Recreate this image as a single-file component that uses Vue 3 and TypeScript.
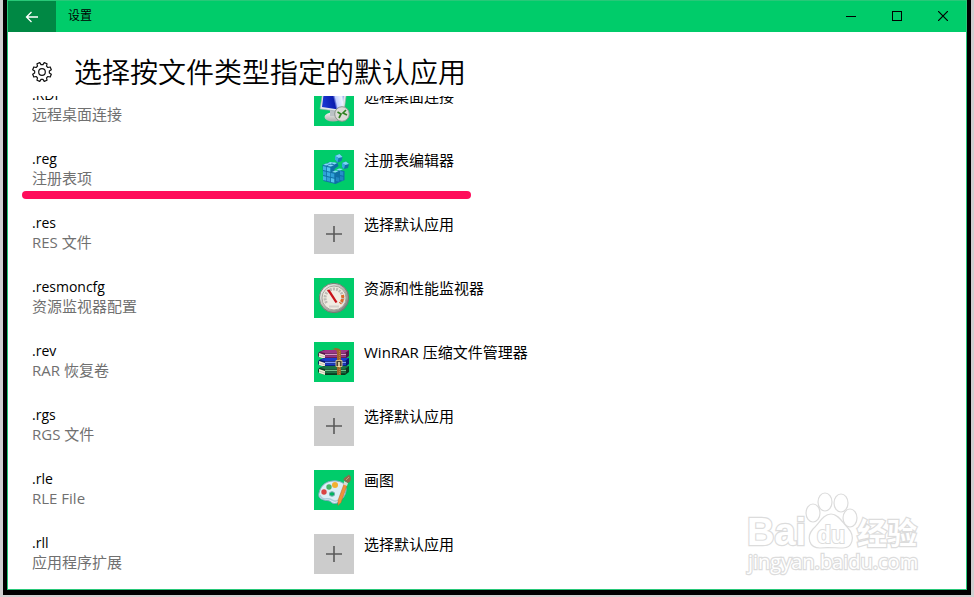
<script setup lang="ts">
type IconName = 'remote' | 'registry' | 'add' | 'gauge' | 'archive' | 'paint'

interface Association {
  ext: string
  kind: string
  app: string
  icon: IconName
  marked?: boolean
}

const associations: Association[] = [
  { ext: '.RDP', kind: '远程桌面连接', app: '远程桌面连接', icon: 'remote' },
  { ext: '.reg', kind: '注册表项', app: '注册表编辑器', icon: 'registry', marked: true },
  { ext: '.res', kind: 'RES 文件', app: '选择默认应用', icon: 'add' },
  { ext: '.resmoncfg', kind: '资源监视器配置', app: '资源和性能监视器', icon: 'gauge' },
  { ext: '.rev', kind: 'RAR 恢复卷', app: 'WinRAR 压缩文件管理器', icon: 'archive' },
  { ext: '.rgs', kind: 'RGS 文件', app: '选择默认应用', icon: 'add' },
  { ext: '.rle', kind: 'RLE File', app: '画图', icon: 'paint' },
  { ext: '.rll', kind: '应用程序扩展', app: '选择默认应用', icon: 'add' },
]

// Front faces of the registry blocks: column, row, fill
const cubes: [number, number, string][] = [
  [9, 16, '#3fb3e6'], [9, 21, '#2f9fd8'], [9, 26, '#3fb3e6'],
  [13, 17, '#52c3ef'], [13, 22, '#3aaee2'], [13, 27, '#2f9fd8'],
  [17, 23, '#2f9fd8'], [17, 28, '#52c3ef'],
  [22, 27, '#1f86c0'], [26, 21, '#2590ca'], [26, 26, '#1f86c0'],
]

const books = [
  { y: 9, cover: '#9c3485', light: '#d795c6', dark: '#571549' },
  { y: 17, cover: '#1a3ccc', light: '#7c9af6', dark: '#08186c' },
  { y: 25, cover: '#1b7445', light: '#6cc28a', dark: '#083a1e' },
]

const gearPoints = Array.from({ length: 32 }, (_, i) => {
  const tooth = Math.floor(i / 4)
  const part = i % 4
  const offsets = [-15, -9, 9, 15]
  const radius = part === 0 || part === 3 ? 7.4 : 9.6
  const angle = ((tooth * 45 + 22.5 + offsets[part]) * Math.PI) / 180
  return `${(10 + Math.cos(angle) * radius).toFixed(2)},${(10 + Math.sin(angle) * radius).toFixed(2)}`
}).join(' ')
</script>

<template>
  <div class="desktop">
    <div class="edge">
      <main class="window">
        <header class="titlebar">
          <button class="back" aria-label="返回">
            <svg width="14" height="12" viewBox="0 0 14 12"><path d="M13 6H1.5M6.5 1L1.5 6l5 5" fill="none" stroke="#fff" stroke-width="1.3" /></svg>
          </button>
          <span class="caption">设置</span>
          <button class="control" aria-label="最小化">
            <svg width="10" height="10" viewBox="0 0 10 10" shape-rendering="crispEdges"><path d="M0 5.5h10" stroke="#000" /></svg>
          </button>
          <button class="control" aria-label="最大化">
            <svg width="10" height="10" viewBox="0 0 10 10" shape-rendering="crispEdges"><path d="M.5.5h9v9h-9z" fill="none" stroke="#000" /></svg>
          </button>
          <button class="control" aria-label="关闭">
            <svg width="10" height="10" viewBox="0 0 10 10"><path d="M0 0l10 10M10 0L0 10" stroke="#000" stroke-width="1.2" /></svg>
          </button>
        </header>

        <div class="heading">
          <svg width="20" height="20" viewBox="0 0 20 20" fill="none" stroke="#111" stroke-width="1.2" stroke-linejoin="round">
            <polygon :points="gearPoints" />
            <circle cx="10" cy="10" r="3.3" />
          </svg>
          <h1>选择按文件类型指定的默认应用</h1>
        </div>

        <div class="viewport">
          <ul class="list">
            <li v-for="item in associations" :key="item.ext" class="row" :class="{ marked: item.marked }">
              <div class="type">
                <span class="ext">{{ item.ext }}</span>
                <span class="kind">{{ item.kind }}</span>
              </div>
              <button class="app">
                <span class="tile" :class="{ empty: item.icon === 'add' }">
                  <svg v-if="item.icon === 'add'" width="40" height="40" viewBox="0 0 40 40">
                    <path d="M12 20h16M20 12v16" stroke="#5a5a5a" stroke-width="1.6" />
                  </svg>
                  <svg v-else-if="item.icon === 'remote'" width="40" height="40" viewBox="0 0 40 40">
                    <defs>
                      <linearGradient id="screen" x1="0" y1=".3" x2="1" y2=".1"><stop offset="0" stop-color="#1a35d0" /><stop offset=".45" stop-color="#0a1cae" /><stop offset=".55" stop-color="#c4d2ff" /><stop offset=".8" stop-color="#eef3ff" /><stop offset="1" stop-color="#4a68e0" /></linearGradient>
                      <linearGradient id="metal" x2="0" y2="1"><stop offset="0" stop-color="#f2f2f2" /><stop offset="1" stop-color="#aaa" /></linearGradient>
                    </defs>
                    <ellipse cx="19" cy="31" rx="8.5" ry="4.5" fill="url(#metal)" />
                    <path d="M16 23h7v7h-7z" fill="#bbc1c5" />
                    <path d="M9 4l24-1-3 23L6 23z" fill="#e3e7e9" stroke="#9ba7ac" stroke-width=".6" />
                    <path d="M10 5l21-1-3 20-20-3z" fill="url(#screen)" />
                    <circle cx="28" cy="28" r="7.3" fill="#dcdcd8" stroke="#8d9690" />
                    <path d="M23.500 26l3.500 2-2 4M32 24l-3 3 4 2" fill="none" stroke="#318222" stroke-width="1.7" />
                  </svg>
                  <svg v-else-if="item.icon === 'registry'" width="40" height="40" viewBox="0 0 40 40">
                    <path d="M8.500 15l7-3 8 1 1 3-4 3v4l4-3 6 1v9l-9 4-12-3z" fill="#0f6ea6" />
                    <path d="M9 15l3-1.500 3.500.5-3 1.500zM13 13.500l3-1.500 3.500.5-3 1.500zM17 13l3-.7 3 .7-2.500 1.500zM13 16l3-1.500 4 .5-3 1.500z" fill="#86dbf7" />
                    <g v-for="([x, y, fill], i) in cubes" :key="i">
                      <path :d="`M${x} ${y}l3.300 .7v4l-3.300-.7z`" :fill="fill" />
                    </g>
                    <path d="M18 22l3-1.500 3.500.5-3 1.500zM22 20l3-1.500 4 .5-3 1.500z" fill="#86dbf7" />
                    <path d="M21 6l4.500-2 3 3-1 4-4 1.500-2.500-3z" fill="#1477ae" />
                    <path d="M21 6l4.500-2 3 3-4 1z" fill="#7ad6f5" /><path d="M21 6l3.500 2-1 4.500-2.500-3z" fill="#35abe0" />
                    <path d="M28 13l4-1.500 3 2.500-1 4-4 1-2-2z" fill="#136fa4" />
                    <path d="M28 13l4-1.500 3 2.500-4 1z" fill="#7ad6f5" /><path d="M28 13l3 2-1 4-2-2z" fill="#35abe0" />
                  </svg>
                  <svg v-else-if="item.icon === 'gauge'" width="40" height="40" viewBox="0 0 40 40">
                    <defs><linearGradient id="rim" x2="1" y2="1"><stop offset="0" stop-color="#fff" /><stop offset=".5" stop-color="#b4b4ae" /><stop offset="1" stop-color="#777" /></linearGradient></defs>
                    <circle cx="20" cy="20" r="14.700" fill="url(#rim)" stroke="#747970" />
                    <circle cx="20" cy="20" r="12" fill="#f0ece2" stroke="#aaa69e" />
                    <path d="M12.500 25a9 9 0 1 1 15 0" fill="none" stroke="#bcbab4" stroke-width="3" stroke-dasharray="2 1" />
                    <path d="M28.500 17a9 9 0 0 1-2.500 8.500" fill="none" stroke="#de6929" stroke-width="3" stroke-dasharray="3 1" />
                    <path d="M13 12l2.500-.5 8 12.500-2 1z" fill="#c8121a" />
                    <path d="M15 28.500h10" stroke="#d3d1ca" stroke-width="2" />
                  </svg>
                  <svg v-else-if="item.icon === 'archive'" width="40" height="40" viewBox="0 0 40 40">
                    <g v-for="book in books" :key="book.y">
                      <path :d="`M5 ${book.y + 1}l5-2h25v6l-4 3H11l-6-2q-2-2 0-5z`" :fill="book.dark" />
                      <path :d="`M6 ${book.y + 1}l5-2h24l-4 3H11z`" :fill="book.cover" />
                      <path :d="`M11 ${book.y + 3.5}h21`" :stroke="book.light" stroke-width="1.500" />
                      <path :d="`M11 ${book.y + 5.5}h21`" :stroke="book.cover" stroke-width="1.500" />
                      <path :d="`M5 ${book.y + 2}l6 2v4l-6-2z`" fill="#f3edd6" />
                      <path :d="`M5 ${book.y + 4}l6 2`" stroke="#999" stroke-width=".5" />
                    </g>
                    <path d="M17 8q5-2 6 2v23h4V9q-1-3-6-3z" fill="#a0662a" />
                    <path d="M25.500 9v23" stroke="#c08c48" stroke-width=".8" stroke-dasharray="1 1" />
                    <path d="M22 18.500h6v6h-6z" fill="#4a4232" stroke="#cdb985" /><path d="M25 20v5" stroke="#fff0b8" stroke-width="1.500" />
                  </svg>
                  <svg v-else width="40" height="40" viewBox="0 0 40 40">
                    <path d="M5 23C7 14 14 10 23 11c7 1 10 5 9 10-1 6-4 8-7 11-3 2-6 2-8 0-2-2-4-1-7-2-4-1-6-3-5-7z" fill="#dceef6" stroke="#7fa9bc" />
                    <path d="M6 25c2 6 6 3 10 4 3 1 4 4 8 1" fill="none" stroke="#a9cedc" stroke-width="1.500" />
                    <ellipse cx="18" cy="24" rx="2.700" ry="2.200" fill="#00b560" stroke="#78a9b1" />
                    <circle cx="10" cy="22" r="2.700" fill="#d94343" /><circle cx="15" cy="17" r="2.700" fill="#46b464" /><circle cx="21" cy="15" r="3" fill="#f3b030" />
                    <path d="M30 14l3 1.500-6 17-3 3v-5z" fill="#f0923a" stroke="#b0662a" stroke-width=".5" />
                    <path d="M30 11l4 2-1 3-3.500-1.500z" fill="#d9d9d2" /><path d="M29.500 10c0-3 4-3 5-5.500l2 1.500c1 3 0 6-2.500 7z" fill="#8f6a4c" />
                    <path d="M32 10l3-3" stroke="#c49a74" />
                  </svg>
                </span>
                <span class="name">{{ item.app }}</span>
              </button>
            </li>
          </ul>
        </div>

        <svg class="watermark" width="180" height="88" viewBox="0 0 180 88" role="img" aria-label="Baidu 经验">
          <g fill="#fff" stroke="#dcdcdc" stroke-width="1.200">
            <g stroke-width="2.400" paint-order="stroke" font-weight="700">
              <text x="3" y="55" font-size="38">Bai</text>
              <text x="113" y="54" font-size="30">经验</text>
              <text x="4" y="79" class="address" font-size="20">jingyan.baidu.com</text>
            </g>
            <ellipse cx="69" cy="23" rx="7" ry="9" /><ellipse cx="81" cy="12" rx="7" ry="9" />
            <ellipse cx="97" cy="13" rx="7" ry="9" /><ellipse cx="106" cy="28" rx="7" ry="9" />
            <path d="M87 24c8 0 12 10 17 14 8 9 4 20-5 20-8 0-16-1-23 0-11 0-14-11-7-19 6-5 10-15 18-15z" />
            <text x="73" y="53" font-size="23" font-weight="700" stroke-width="2" paint-order="stroke">du</text>
          </g>
        </svg>
      </main>
    </div>
  </div>
</template>

<style>
body {
  margin: 0;
}
</style>

<style scoped>
.desktop {
  box-sizing: border-box;
  display: flex;
  height: 100vh;
  padding: 0 3px 2px;
  background: #d0d0d0;
  font-family: "Open Sans", "Noto Sans CJK SC", sans-serif;
  color: #000;
}

.edge {
  display: flex;
  flex: 1;
  min-width: 0;
  padding: 0 4px 5px;
  background: #000;
}

.window {
  position: relative;
  display: flex;
  flex: 1;
  flex-direction: column;
  min-width: 0;
  border: 1px solid #28c878;
  background: #fff;
}

.titlebar {
  display: flex;
  flex: none;
  height: 31px;
  background: #00cc6a;
}

button {
  padding: 0;
  border: 0;
  background: none;
  color: inherit;
  font: inherit;
}

.back,
.control {
  display: grid;
  width: 48px;
  height: 30px;
  place-items: center;
}

.back {
  height: 31px;
  background: #008844;
}

.control {
  width: 46px;
}

.caption {
  flex: 1;
  padding-left: 12px;
  font-size: 12px;
  line-height: 30px;
}

.heading {
  display: flex;
  flex: none;
  align-items: center;
  gap: 22px;
  height: 64px;
  padding: 0 24px;
}

.heading svg {
  margin-top: 16px;
}

h1 {
  margin: 16px 0 0;
  font-size: 28px;
  font-weight: 350;
  line-height: 40px;
}

.viewport {
  flex: 1;
  min-height: 0;
  overflow: hidden;
}

.list {
  display: grid;
  gap: 24px;
  margin: -10px 0 0;
  padding: 0 24px;
  list-style: none;
}

.row {
  position: relative;
  display: grid;
  grid-template-columns: 282px 1fr;
  height: 40px;
}

.type {
  display: flex;
  flex-direction: column;
}

.ext {
  font-size: 14px;
  line-height: 18px;
}

.kind {
  color: #707070;
  font-size: 15px;
  line-height: 20px;
}

.kind,
.name {
  font-family: "Open Sans", "Noto Sans CJK SC", sans-serif;
  font-weight: 400;
}

.app {
  display: flex;
  gap: 10px;
  font-size: 15px;
  line-height: 20px;
  text-align: left;
}

.tile {
  width: 40px;
  height: 40px;
  background: #00cc6a;
}

.tile.empty {
  background: #ccc;
}

.tile svg {
  display: block;
}

.marked::after {
  position: absolute;
  top: 41px;
  left: -10px;
  width: 449px;
  height: 8px;
  border-radius: 4px;
  background: #ff0d5b;
  content: "";
}

.watermark {
  position: absolute;
  right: 42px;
  bottom: 11px;
  font-family: "Liberation Sans", "Noto Sans CJK SC", sans-serif;
}

.address {
  font-family: "Open Sans", sans-serif;
  font-weight: 500;
}
</style>
